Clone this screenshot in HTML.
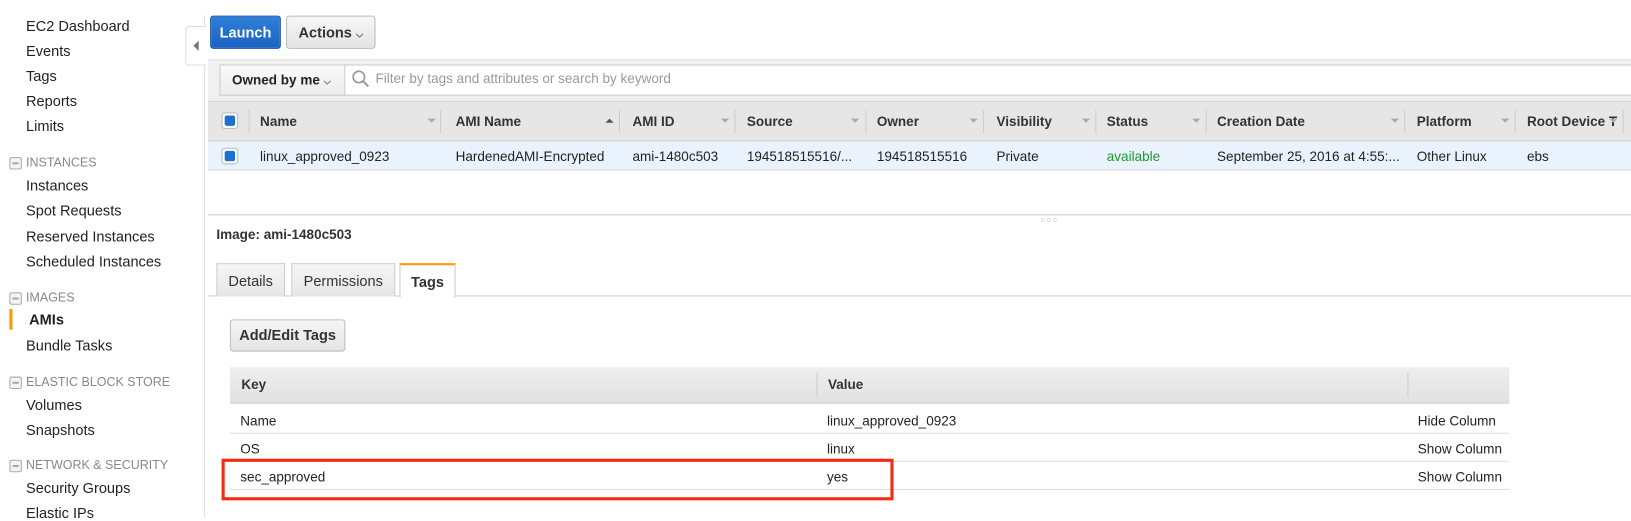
<!DOCTYPE html>
<html><head><meta charset="utf-8"><style>
*{box-sizing:border-box;margin:0;padding:0}
html,body{width:1631px;height:517px;overflow:hidden;background:#fff}
#w{position:absolute;left:0;top:0;width:1568px;height:497px;transform:scale(1.0402);transform-origin:0 0;font-family:"Liberation Sans",Arial,sans-serif;font-size:13px;color:#222}
.a{position:absolute;white-space:nowrap}
.nav{left:25px;font-size:14px;color:#222}
.sec{left:25px;font-size:12px;color:#888}
.sec:before{content:"";position:absolute;left:-16px;top:2px;width:10px;height:10px;border:1px solid #aaa;border-radius:2px;background:linear-gradient(#aaa,#aaa) center/6px 2px no-repeat #f4f4f4}
.th{font-weight:bold;color:#333;top:109px}
.td{top:143px;color:#222}
.sep{position:absolute;top:106px;width:1px;height:22px;background:#ccc}
.dd{position:absolute;top:114px;width:0;height:0;border-left:4px solid transparent;border-right:4px solid transparent;border-top:4px solid #aaa}
.cb{position:absolute;left:213px;width:16px;height:16px;border:1px solid #bbb;border-radius:3px;background:#fff}
.cb:after{content:"";position:absolute;left:2px;top:2px;width:10px;height:10px;background:#1f6fd0;border-radius:2px}
.btn{position:absolute;border:1px solid #bbb;border-radius:3px;background:linear-gradient(#f6f6f6,#e4e4e4);font-weight:bold;color:#333;font-size:14px;text-align:center}
.tab{position:absolute;top:253px;height:32px;border:1px solid #ccc;border-bottom:none;background:linear-gradient(#f6f6f6,#e6e6e6);font-size:14px;color:#333;text-align:center;line-height:32px}
.hl{position:absolute;left:221px;width:1230px;height:1px;background:#ddd}
</style></head><body><div id="w">
<div class="a nav" style="top:17px">EC2 Dashboard</div>
<div class="a nav" style="top:41px">Events</div>
<div class="a nav" style="top:65px">Tags</div>
<div class="a nav" style="top:89px">Reports</div>
<div class="a nav" style="top:113px">Limits</div>
<div class="a sec" style="top:149px">INSTANCES</div>
<div class="a nav" style="top:170px">Instances</div>
<div class="a nav" style="top:194px">Spot Requests</div>
<div class="a nav" style="top:219px">Reserved Instances</div>
<div class="a nav" style="top:243px">Scheduled Instances</div>
<div class="a sec" style="top:279px">IMAGES</div>
<div class="a" style="left:9px;top:297px;width:3px;height:20px;background:#f90"></div>
<div class="a nav" style="top:299px;left:28px;font-weight:bold">AMIs</div>
<div class="a nav" style="top:324px">Bundle Tasks</div>
<div class="a sec" style="top:360px">ELASTIC BLOCK STORE</div>
<div class="a nav" style="top:381px">Volumes</div>
<div class="a nav" style="top:405px">Snapshots</div>
<div class="a sec" style="top:440px">NETWORK &amp; SECURITY</div>
<div class="a nav" style="top:461px">Security Groups</div>
<div class="a nav" style="top:485px">Elastic IPs</div>
<div class="a" style="left:196px;top:15px;width:1px;height:482px;background:#ddd"></div>
<div class="a" style="left:178px;top:25px;width:20px;height:38px;border:1px solid #ddd;border-right:none;border-radius:4px 0 0 4px;background:#fff"></div>
<div class="a" style="left:186px;top:39px;border-top:5px solid transparent;border-bottom:5px solid transparent;border-right:5px solid #777"></div>
<div class="btn" style="left:202px;top:15px;width:68px;height:32px;line-height:30px;background:linear-gradient(#2f7fd8,#1a63c0);border-color:#1757a8;color:#fff">Launch</div>
<div class="btn" style="left:275px;top:15px;width:86px;height:32px;line-height:30px">Actions <span style="font-size:9px;color:#555">&#9013;</span></div>
<div class="a" style="left:200px;top:57px;width:1368px;height:40px;background:#f0f0f0;border-top:1px solid #ddd"></div>
<div class="a" style="left:211px;top:62px;width:1357px;height:30px;border:1px solid #ccc;border-right:none;background:#fff"></div>
<div class="a" style="left:211px;top:62px;width:121px;height:30px;border:1px solid #ccc;background:linear-gradient(#fafafa,#ececec);font-weight:bold;font-size:13px;line-height:28px;padding-left:11px;color:#222">Owned by me <span style="font-size:9px;color:#666">&#9013;</span></div>
<svg class="a" style="left:338px;top:67px" width="18" height="18"><circle cx="7" cy="7" r="5.5" fill="none" stroke="#999" stroke-width="1.6"/><line x1="11" y1="11" x2="16" y2="16" stroke="#999" stroke-width="2"/></svg>
<div class="a" style="left:361px;top:68px;color:#999;font-size:13px">Filter by tags and attributes or search by keyword</div>
<div class="a" style="left:200px;top:97px;width:1368px;height:39px;background:#e6e6e6;border-top:1px solid #d4d4d4;border-bottom:1px solid #d0d0d0"></div>
<div class="cb" style="top:108px"></div>
<div class="sep" style="left:239px"></div>
<div class="a th" style="left:250px">Name</div><div class="dd" style="left:411px"></div><div class="sep" style="left:423px"></div>
<div class="a th" style="left:438px">AMI Name</div><div class="dd" style="left:582px;border-top:none;border-bottom:4px solid #555"></div><div class="sep" style="left:595px"></div>
<div class="a th" style="left:608px">AMI ID</div><div class="dd" style="left:693px"></div><div class="sep" style="left:706px"></div>
<div class="a th" style="left:718px">Source</div><div class="dd" style="left:818px"></div><div class="sep" style="left:832px"></div>
<div class="a th" style="left:843px">Owner</div><div class="dd" style="left:932px"></div><div class="sep" style="left:945px"></div>
<div class="a th" style="left:958px">Visibility</div><div class="dd" style="left:1040px"></div><div class="sep" style="left:1053px"></div>
<div class="a th" style="left:1064px">Status</div><div class="dd" style="left:1146px"></div><div class="sep" style="left:1159px"></div>
<div class="a th" style="left:1170px">Creation Date</div><div class="dd" style="left:1337px"></div><div class="sep" style="left:1350px"></div>
<div class="a th" style="left:1362px">Platform</div><div class="dd" style="left:1443px"></div><div class="sep" style="left:1456px"></div>
<div class="a th" style="left:1468px">Root Device T</div><div class="dd" style="left:1547px"></div><div class="sep" style="left:1560px"></div>
<div class="a" style="left:200px;top:136px;width:1368px;height:28px;background:#eaf3fd;border-bottom:1px solid #d8dde4"></div>
<div class="cb" style="top:142px"></div>
<div class="a td" style="left:250px">linux_approved_0923</div>
<div class="a td" style="left:438px">HardenedAMI-Encrypted</div>
<div class="a td" style="left:608px">ami-1480c503</div>
<div class="a td" style="left:718px">194518515516/...</div>
<div class="a td" style="left:843px">194518515516</div>
<div class="a td" style="left:958px">Private</div>
<div class="a td" style="left:1064px;color:#1d9a2b">available</div>
<div class="a td" style="left:1170px">September 25, 2016 at 4:55:...</div>
<div class="a td" style="left:1362px">Other Linux</div>
<div class="a td" style="left:1468px">ebs</div>
<div class="a" style="left:200px;top:206px;width:1368px;height:1px;background:#ccc"></div>
<div class="a" style="left:1000px;top:207px;color:#bbb;font-size:8px;letter-spacing:1px">○○○</div>
<div class="a" style="left:208px;top:218px;font-weight:bold;font-size:13px;color:#333">Image: ami-1480c503</div>
<div class="a" style="left:200px;top:284px;width:1368px;height:1px;background:#ccc"></div>
<div class="tab" style="left:208px;width:66px">Details</div>
<div class="tab" style="left:280px;width:100px">Permissions</div>
<div class="tab" style="left:384px;width:54px;background:#fff;border-top:2px solid #f90;height:33px;font-weight:bold">Tags</div>
<div class="btn" style="left:221px;top:307px;width:111px;height:31px;line-height:29px">Add/Edit Tags</div>
<div class="a" style="left:221px;top:353px;width:1230px;height:35px;background:linear-gradient(#eee,#e2e2e2);border-bottom:1px solid #ccc"></div>
<div class="a" style="left:232px;top:362px;font-weight:bold;color:#333;font-size:13px">Key</div>
<div class="a" style="left:785px;top:358px;width:1px;height:24px;background:#ccc"></div>
<div class="a" style="left:796px;top:362px;font-weight:bold;color:#333;font-size:13px">Value</div>
<div class="a" style="left:1353px;top:358px;width:1px;height:24px;background:#ccc"></div>
<div class="a" style="left:231px;top:397px">Name</div><div class="a" style="left:795px;top:397px">linux_approved_0923</div><div class="a" style="left:1363px;top:397px">Hide Column</div>
<div class="hl" style="top:416px"></div>
<div class="a" style="left:231px;top:424px">OS</div><div class="a" style="left:795px;top:424px">linux</div><div class="a" style="left:1363px;top:424px">Show Column</div>
<div class="hl" style="top:443px"></div>
<div class="a" style="left:231px;top:451px">sec_approved</div><div class="a" style="left:795px;top:451px">yes</div><div class="a" style="left:1363px;top:451px">Show Column</div>
<div class="hl" style="top:470px"></div>
<div class="a" style="left:213px;top:441px;width:646px;height:40px;border:3px solid #f52a12"></div>
</div></body></html>
